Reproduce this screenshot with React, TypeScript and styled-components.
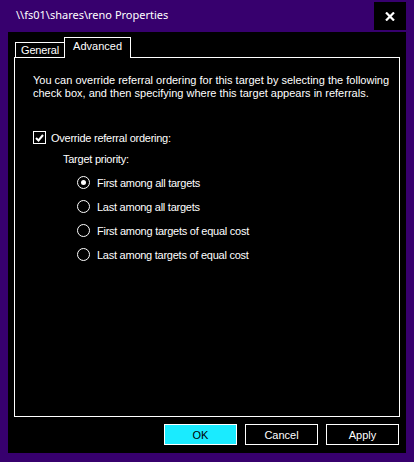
import React from "react";
import styled, { createGlobalStyle } from "styled-components";

const Global = createGlobalStyle`
  html, body { margin: 0; padding: 0; background: #37006e; }
  * { box-sizing: border-box; }
`;

const Window = styled.div`
  width: 414px;
  height: 462px;
  background: #37006e;
  display: flex;
  flex-direction: column;
  font-family: "Liberation Sans", Arial, sans-serif;
  color: #fff;
`;

const TitleBar = styled.div`
  height: 32px;
  display: flex;
  align-items: flex-start;
  padding-left: 16px;
`;

const Title = styled.div`
  font-family: "Noto Sans", "Open Sans", sans-serif;
  font-size: 11px;
  line-height: 30px;
  flex: 1;
  color: #fff;
`;

const CloseButton = styled.div`
  width: 32px;
  height: 28px;
  margin-top: 2px;
  margin-right: 8px;
  background: #000;
  display: flex;
  align-items: center;
  justify-content: center;
`;

const Body = styled.div`
  margin: 0 8px 9px 8px;
  height: 421px;
  background: #000;
  padding: 6px 6px 0 6px;
  display: flex;
  flex-direction: column;
  font-size: 11px;
  letter-spacing: -0.25px;
`;

const TabStrip = styled.div`
  height: 20px;
  display: flex;
  align-items: flex-end;
  padding-left: 1px;
  position: relative;
  z-index: 1;
  margin-bottom: -1px;
`;

const Tab = styled.div<{ $active?: boolean }>`
  border: 1px solid #fff;
  border-bottom: ${(p) => (p.$active ? "none" : "1px solid #fff")};
  background: #000;
  color: #fff;
  height: ${(p) => (p.$active ? "21px" : "16px")};
  line-height: ${(p) => (p.$active ? "16px" : "15px")};
  padding: ${(p) => (p.$active ? "0 8px 0 8px" : "0 5px 0 5px")};
  margin-left: ${(p) => (p.$active ? "-1px" : "0")};
  letter-spacing: ${(p) => (p.$active ? "0" : "-0.15px")};
`;

const Panel = styled.div`
  width: 386px;
  height: 360px;
  border: 1px solid #fff;
  padding: 16px 18px 0 18px;
  display: flex;
  flex-direction: column;
`;

const Intro = styled.p`
  margin: 0;
  line-height: 13px;
  white-space: nowrap;
  letter-spacing: 0;
`;

const CheckRow = styled.label`
  display: flex;
  align-items: center;
  margin-top: 31px;
  height: 13px;
  gap: 5px;
`;

const CheckBox = styled.span`
  width: 13px;
  height: 13px;
  border: 1px solid #fff;
  display: flex;
  align-items: center;
  justify-content: center;
`;

const GroupLabel = styled.div`
  margin-top: 9px;
  margin-left: 30px;
  line-height: 13px;
`;

const RadioList = styled.div`
  display: flex;
  flex-direction: column;
  gap: 11px;
  margin-top: 10px;
  margin-left: 44px;
`;

const RadioRow = styled.div`
  display: flex;
  align-items: center;
  height: 13px;
  gap: 7px;
`;

const Radio = styled.span<{ $on?: boolean }>`
  width: 13px;
  height: 13px;
  border: 1px solid #fff;
  border-radius: 50%;
  display: flex;
  align-items: center;
  justify-content: center;
  &::after {
    content: "";
    width: 5px;
    height: 5px;
    border-radius: 50%;
    background: ${(p) => (p.$on ? "#fff" : "transparent")};
  }
`;

const ButtonRow = styled.div`
  display: flex;
  justify-content: flex-end;
  gap: 8px;
  margin-top: 7px;
  padding-right: 1px;
`;

const Button = styled.div<{ $primary?: boolean }>`
  width: 73px;
  height: 21px;
  border: 1px solid #fff;
  background: ${(p) => (p.$primary ? "#1aebff" : "#000")};
  color: ${(p) => (p.$primary ? "#000" : "#fff")};
  display: flex;
  align-items: center;
  justify-content: center;
  letter-spacing: 0;
`;

const radios = [
  { label: "First among all targets", on: true },
  { label: "Last among all targets", on: false },
  { label: "First among targets of equal cost", on: false },
  { label: "Last among targets of equal cost", on: false },
];

export default function App() {
  return (
    <>
      <Global />
      <Window>
        <TitleBar>
          <Title>\\fs01\shares\reno Properties</Title>
          <CloseButton>
            <svg width="10" height="9" viewBox="0 0 10 9">
              <path d="M1 0.5 L9 8.5 M9 0.5 L1 8.5" stroke="#fff" strokeWidth="2.2" />
            </svg>
          </CloseButton>
        </TitleBar>
        <Body>
          <TabStrip>
            <Tab>General</Tab>
            <Tab $active>Advanced</Tab>
          </TabStrip>
          <Panel>
            <Intro>
              You can override referral ordering for this target by selecting the following
              <br />
              check box, and then specifying where this target appears in referrals.
            </Intro>
            <CheckRow>
              <CheckBox>
                <svg width="9" height="8" viewBox="0 0 9 8">
                  <path d="M1 4 L3.5 6.5 L8 1" stroke="#fff" strokeWidth="2" fill="none" />
                </svg>
              </CheckBox>
              Override referral ordering:
            </CheckRow>
            <GroupLabel>Target priority:</GroupLabel>
            <RadioList>
              {radios.map((r) => (
                <RadioRow key={r.label}>
                  <Radio $on={r.on} />
                  {r.label}
                </RadioRow>
              ))}
            </RadioList>
          </Panel>
          <ButtonRow>
            <Button $primary>OK</Button>
            <Button>Cancel</Button>
            <Button>Apply</Button>
          </ButtonRow>
        </Body>
      </Window>
    </>
  );
}
